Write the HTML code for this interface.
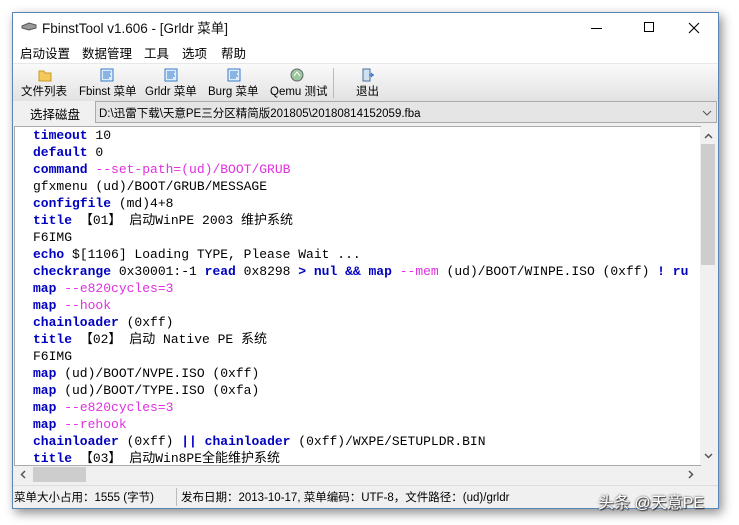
<!DOCTYPE html>
<html><head><meta charset="utf-8"><style>
*{margin:0;padding:0;box-sizing:border-box}
body{width:739px;height:525px;background:#fff;position:relative;overflow:hidden;font-family:"Liberation Sans","Noto Sans CJK SC",sans-serif;font-size:12px;color:#000}
.win{position:absolute;left:12px;top:12px;width:707px;height:497px;background:#f0f0f0;border:1px solid #5a86b5;box-shadow:3px 4px 10px rgba(0,0,0,.45)}
.abs{position:absolute}
.title{left:0;top:0;width:705px;height:30px;background:#fff}
.menu{left:0;top:30px;width:705px;height:20px;background:#fff;font-size:12.5px}
.menu span{position:absolute;top:0px}
.tb{left:0;top:50px;width:705px;height:38px;background:linear-gradient(#fafafa,#e2e2e2);border-top:1px solid #e8e8e8}
.tbi{position:absolute;top:0;font-size:11.5px;white-space:nowrap}
.tbi .ic{position:absolute;top:4px;width:14px;height:14px}
.tbi .lb{position:absolute;top:19px;left:0;white-space:nowrap}
.ed{left:1px;top:113px;width:687px;height:340px;background:#fff;border:1px solid #aaa}
.code{position:absolute;left:18px;top:0;font-family:"Liberation Mono","Noto Sans CJK SC",monospace;font-size:13px;line-height:17px;white-space:pre;color:#000}
.k{color:#0000c0;font-weight:bold}
.m{color:#e030e0}
</style></head><body>
<div class="win">
 <div class="abs title">
  <svg class="abs" style="left:8px;top:9px" width="16" height="9"><path d="M1 4 L8 1 L15 3 L15 6 L8 8 L1 6Z" fill="#999" stroke="#555"/></svg>
  <div class="abs" style="left:29px;top:4px;font-size:13.5px;color:#111">FbinstTool v1.606 - [Grldr 菜单]</div>
  <div class="abs" style="left:578px;top:15px;width:11px;height:1px;background:#000"></div>
  <div class="abs" style="left:631px;top:9px;width:10px;height:10px;border:1px solid #000"></div>
  <svg class="abs" style="left:675px;top:9px" width="12" height="12"><path d="M1 1L11 11M11 1L1 11" stroke="#000" stroke-width="1.1"/></svg>
 </div>
 <div class="abs menu">
  <span style="left:7px">启动设置</span><span style="left:69px">数据管理</span><span style="left:131px">工具</span><span style="left:169px">选项</span><span style="left:208px">帮助</span>
 </div>
 <div class="abs tb">
  <div class="tbi" style="left:8px"><svg class="ic" style="left:17px" viewBox="0 0 14 14"><path d="M1 3h5l1 2h6v8H1z" fill="#f4c85a" stroke="#c99a2a"/></svg><span class="lb">文件列表</span></div>
  <div class="tbi" style="left:66px"><svg class="ic" style="left:21px" viewBox="0 0 14 14"><rect x="1" y="1" width="12" height="12" fill="#dfeefc" stroke="#3a7bc8"/><path d="M3 4h8M3 6h7M3 8h8M3 10h6" stroke="#3a7bc8"/></svg><span class="lb">Fbinst 菜单</span></div>
  <div class="tbi" style="left:132px"><svg class="ic" style="left:19px" viewBox="0 0 14 14"><rect x="1" y="1" width="12" height="12" fill="#dfeefc" stroke="#3a7bc8"/><path d="M3 4h8M3 6h7M3 8h8M3 10h6" stroke="#3a7bc8"/></svg><span class="lb">Grldr 菜单</span></div>
  <div class="tbi" style="left:195px"><svg class="ic" style="left:19px" viewBox="0 0 14 14"><rect x="1" y="1" width="12" height="12" fill="#dfeefc" stroke="#3a7bc8"/><path d="M3 4h8M3 6h7M3 8h8M3 10h6" stroke="#3a7bc8"/></svg><span class="lb">Burg 菜单</span></div>
  <div class="tbi" style="left:257px"><svg class="ic" style="left:20px" viewBox="0 0 14 14"><circle cx="7" cy="7" r="6" fill="#9bc89b" stroke="#667"/><path d="M4 8l3-4 3 4" stroke="#fff" fill="none"/></svg><span class="lb">Qemu 测试</span></div>
  <div class="abs" style="left:320px;top:4px;width:1px;height:30px;background:#bbb"></div>
  <div class="tbi" style="left:343px"><svg class="ic" style="left:5px" viewBox="0 0 14 14"><rect x="2" y="1" width="7" height="12" fill="#cfe0f0" stroke="#4a6f9a"/><path d="M8 7h5M10 5l2 2-2 2" stroke="#1a6fd0" fill="none"/></svg><span class="lb">退出</span></div>
 </div>
 <div class="abs" style="left:17px;top:91px;font-size:12.5px">选择磁盘</div>
 <div class="abs" style="left:82px;top:88px;width:622px;height:22px;background:#e5e5e5;border:1px solid #aaa;font-size:11.5px;padding:3px 0 0 3px">D:\迅雷下载\天意PE三分区精简版201805\20180814152059.fba
  <svg class="abs" style="right:4px;top:8px" width="10" height="6"><path d="M1 1l4 4 4-4" stroke="#555" fill="none"/></svg></div>
 <div class="abs ed">
  <div class="code"><span class="k">timeout</span> 10
<span class="k">default</span> 0
<span class="k">command</span> <span class="m">--set-path=(ud)/BOOT/GRUB</span>
gfxmenu (ud)/BOOT/GRUB/MESSAGE
<span class="k">configfile</span> (md)4+8
<span class="k">title</span> 【01】 启动WinPE 2003 维护系统
F6IMG
<span class="k">echo</span> $[1106] Loading TYPE, Please Wait ...
<span class="k">checkrange</span> 0x30001:-1 <span class="k">read</span> 0x8298 <span class="k">&gt; nul &amp;&amp; map</span> <span class="m">--mem</span> (ud)/BOOT/WINPE.ISO (0xff) <span class="k">! ru</span>
<span class="k">map</span> <span class="m">--e820cycles=3</span>
<span class="k">map</span> <span class="m">--hook</span>
<span class="k">chainloader</span> (0xff)
<span class="k">title</span> 【02】 启动 Native PE 系统
F6IMG
<span class="k">map</span> (ud)/BOOT/NVPE.ISO (0xff)
<span class="k">map</span> (ud)/BOOT/TYPE.ISO (0xfa)
<span class="k">map</span> <span class="m">--e820cycles=3</span>
<span class="k">map</span> <span class="m">--rehook</span>
<span class="k">chainloader</span> (0xff) <span class="k">||</span> <span class="k">chainloader</span> (0xff)/WXPE/SETUPLDR.BIN
<span class="k">title</span> 【03】 启动Win8PE全能维护系统</div>
 </div>
 <div class="abs" style="left:687px;top:114px;width:16px;height:338px;background:#f0f0f0">
  <svg class="abs" style="left:4px;top:6px" width="9" height="6"><path d="M1 5l3.5-3.5L8 5" stroke="#555" stroke-width="1.5" fill="none"/></svg>
  <div class="abs" style="left:1px;top:17px;width:14px;height:121px;background:#cdcdcd"></div>
  <svg class="abs" style="left:4px;top:326px" width="9" height="6"><path d="M1 1l3.5 3.5L8 1" stroke="#555" stroke-width="1.5" fill="none"/></svg>
 </div>
 <div class="abs" style="left:1px;top:453px;width:686px;height:17px;background:#f0f0f0">
  <svg class="abs" style="left:6px;top:4px" width="6" height="9"><path d="M5 1L1.5 4.5 5 8" stroke="#555" stroke-width="1.5" fill="none"/></svg>
  <div class="abs" style="left:19px;top:1px;width:53px;height:15px;background:#cdcdcd"></div>
  <svg class="abs" style="left:674px;top:4px" width="6" height="9"><path d="M1 1l3.5 3.5L1 8" stroke="#555" stroke-width="1.5" fill="none"/></svg>
 </div>
 <div class="abs" style="left:0;top:472px;width:705px;height:23px;background:#f0f0f0;border-top:1px solid #ddd;font-size:11.5px">
  <span class="abs" style="left:1px;top:3px">菜单大小占用：1555 (字节)</span>
  <div class="abs" style="left:163px;top:2px;width:1px;height:18px;background:#bbb"></div>
  <span class="abs" style="left:168px;top:3px">发布日期：2013-10-17, 菜单编码：UTF-8，文件路径：(ud)/grldr</span>
 </div>
</div>
<div class="abs" style="left:598px;top:489px;font-size:16px;color:#fff;text-shadow:0 0 2px #333,1px 1px 1px #333">头条 @天意PE</div>
</body></html>
